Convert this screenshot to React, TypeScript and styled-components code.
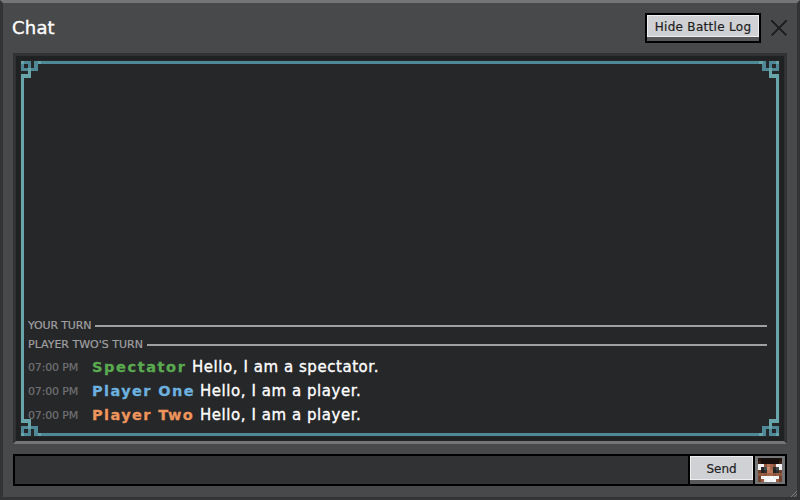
import React from 'react';
import styled, { createGlobalStyle } from 'styled-components';

const Global = createGlobalStyle`
  * { box-sizing: border-box; }
  body { margin: 0; overflow: hidden; background: #313233; font-family: "DejaVu Sans", sans-serif; }
`;

const Window = styled.main`
  width: 800px;
  height: 500px;
  display: flex;
  flex-direction: column;
  padding: 10px 10px 11px;
  background: #48494a;
  border: 3px solid #333435;
  border-top-color: #747576;
  position: relative;
`;

const Header = styled.header`
  height: 30px;
  display: flex;
  align-items: center;
  gap: 10px;
`;

const Title = styled.h1`
  margin: -1px auto 0 -1px;
  font-size: 18px;
  font-weight: 400;
  line-height: 24px;
  letter-spacing: 0.2px;
  color: #fff;
  -webkit-text-stroke: 0.35px #fff;
`;

const Button = styled.button<{ $width: number; $spacing: number; $joined?: boolean }>`
  width: ${p => p.$width}px;
  height: ${p => (p.$joined ? 28 : 26)}px;
  padding: 0 0 2px;
  border: 0;
  box-shadow: inset 0 -4px #58585a, inset 0 0 0 1px #eeeef0, inset 0 -5px #eeeef0;
  background: #d0d1d4;
  color: #1e1e1f;
  font: 12px/20px "DejaVu Sans", sans-serif;
  letter-spacing: ${p => p.$spacing}px;
  white-space: nowrap;
  -webkit-text-stroke: 0.2px #1e1e1f;
`;

const ButtonFrame = styled.div`
  border: 2px solid #000;
  display: flex;
`;

const CloseIcon = styled.svg`
  width: 16px;
  height: 16px;
  display: block;
`;

const LogPanel = styled.section`
  margin-top: 10px;
  height: 391px;
  border: 3px solid #313233;
  border-bottom-color: #747576;
  box-shadow: inset 0 0 0 4px #202122;
  background: #262729;
  padding: 5px;
  position: relative;
`;

const Ornament = styled.svg`
  position: absolute;
  left: 5px;
  top: 5px;
  width: 758px;
  height: 375px;
`;

const Log = styled.div`
  height: 100%;
  display: flex;
  flex-direction: column;
  justify-content: flex-end;
  padding: 0 12px 9px 7px;
  position: relative;
`;

const Turns = styled.div`
  margin-bottom: 1px;
`;

const Turn = styled.div<{ $spacing: number }>`
  height: 19px;
  display: flex;
  align-items: center;
  color: #a0a0a2;
  font-size: 11px;
  letter-spacing: ${p => p.$spacing}px;
  white-space: nowrap;
  -webkit-text-stroke: 0.2px #a0a0a2;
  &::after {
    content: '';
    flex: 1;
    height: 2px;
    background: #a0a0a2;
  }
`;

const TurnLabel = styled.span<{ $width: number }>`
  width: ${p => p.$width}px;
`;

const Message = styled.div`
  height: 24px;
  display: flex;
  align-items: center;
  white-space: nowrap;
  line-height: 24px;
`;

const Time = styled.time`
  width: 64px;
  padding-top: 2px;
  color: #727274;
  font-size: 11px;
  letter-spacing: -0.15px;
  -webkit-text-stroke: 0.2px #727274;
`;

const Name = styled.strong<{ $color: string; $width: number; $spacing: number }>`
  width: ${p => p.$width}px;
  color: ${p => p.$color};
  font-size: 14.5px;
  letter-spacing: ${p => p.$spacing}px;
  -webkit-text-stroke: 0.3px ${p => p.$color};
`;

const Body = styled.span`
  color: #fff;
  font-size: 15px;
  letter-spacing: 0.55px;
  -webkit-text-stroke: 0.35px #fff;
`;

const Compose = styled.form`
  margin-top: 10px;
  height: 32px;
  display: flex;
  gap: 2px;
  border: 2px solid #000;
  background: #000;
`;

const Input = styled.input`
  flex: 1;
  min-width: 0;
  border: 0;
  outline: 0;
  background: #313233;
  color: #fff;
`;

const Avatar = styled.svg`
  width: 30px;
  height: 28px;
  display: block;
  background: #747576;
`;

const Grip = styled.svg`
  position: absolute;
  right: 0;
  bottom: 0;
  width: 6px;
  height: 6px;
`;

const cornerRows = ['abb.ba', 'b.b.b.', 'bbabb.', '..a...', 'aaa...', 'a.....'];

function Corner({ transform }: { transform: string }) {
  return (
    <g transform={transform} shapeRendering="crispEdges">
      {cornerRows.flatMap((row, y) => [...row].map((c, x) => c === '.' ? null : (
        <rect key={`${x}-${y}`} x={x * 3.3} y={y * 3.3} width="3.35" height="3.35" fill={c === 'a' ? '#67a5aa' : '#4f8998'} />
      )))}
    </g>
  );
}

const face: string[] = [
  '#23130e #17100d #15100d #17100d #17100d #15100d #17100d #23130e',
  '#3a2118 #15100d #17100d #17100d #15100d #17100d #15100d #3a2118',
  '#f3f3f3 #f3f3f3 #8a543d #b97858 #a4664a #8a543d #f3f3f3 #f3f3f3',
  '#f3f3f3 #292929 #475050 #c98c70 #a4664a #292929 #475050 #f3f3f3',
  '#70412f #202020 #303030 #b97858 #b97858 #202020 #303030 #70412f',
  '#905838 #9a5c42 #8a543d #a4664a #a4664a #8a543d #9a5c42 #905838',
  '#70412f #f3f3f3 #ffffff #f3f3f3 #ffffff #f3f3f3 #f3f3f3 #70412f',
  '#70412f #9a5c42 #f3f3f3 #ffffff #f3f3f3 #ffffff #9a5c42 #70412f',
];

const messages = [
  { name: 'Spectator', color: '#5aab50', width: 100, spacing: 1.6, text: 'Hello, I am a spectator.' },
  { name: 'Player One', color: '#6cb1df', width: 108, spacing: 1.4, text: 'Hello, I am a player.' },
  { name: 'Player Two', color: '#ed955c', width: 108, spacing: 1.4, text: 'Hello, I am a player.' },
];

export default function App() {
  return (
    <>
      <Global />
      <Window>
        <Header>
          <Title>Chat</Title>
          <ButtonFrame><Button $width={112} $spacing={0.3}>Hide Battle Log</Button></ButtonFrame>
          <CloseIcon viewBox="0 0 16 16" shapeRendering="crispEdges">
            <path d="M.5 .5L15.5 15.5M15.5 .5L.5 15.5" stroke="#202122" strokeWidth="1.8" />
          </CloseIcon>
        </Header>
        <LogPanel>
          <Ornament viewBox="0 0 758 375">
            <path d="M17 1.5H741M17 373.5H741" stroke="#4f8998" strokeWidth="3" />
            <path d="M1.5 15V360M756.5 15V360" stroke="#67a5aa" strokeWidth="3" />
            <Corner transform="translate(0 0)" />
            <Corner transform="translate(758 0) scale(-1 1)" />
            <Corner transform="translate(0 375) scale(1 -1)" />
            <Corner transform="translate(758 375) scale(-1 -1)" />
          </Ornament>
          <Log>
            <Turns>
              <Turn $spacing={-0.15}><TurnLabel $width={67}>YOUR TURN</TurnLabel></Turn>
              <Turn $spacing={0}><TurnLabel $width={119}>PLAYER TWO'S TURN</TurnLabel></Turn>
            </Turns>
            {messages.map(m => (
              <Message key={m.name}>
                <Time>07:00 PM</Time>
                <Name $color={m.color} $width={m.width} $spacing={m.spacing}>{m.name}</Name>
                <Body>{m.text}</Body>
              </Message>
            ))}
          </Log>
        </LogPanel>
        <Compose onSubmit={e => e.preventDefault()}>
          <Input aria-label="Message" />
          <Button $width={63} $spacing={0} $joined>Send</Button>
          <Avatar viewBox="0 0 30 28" shapeRendering="crispEdges">
            {face.flatMap((row, y) => row.split(' ').map((fill, x) => (
              <rect key={`${x}-${y}`} x={3 + x * 3} y={2 + y * 3} width="3" height="3" fill={fill} />
            )))}
          </Avatar>
        </Compose>
        <Grip viewBox="0 0 6 6"><path d="M0 6L6 0M3 6L6 3" stroke="#777" /></Grip>
      </Window>
    </>
  );
}
